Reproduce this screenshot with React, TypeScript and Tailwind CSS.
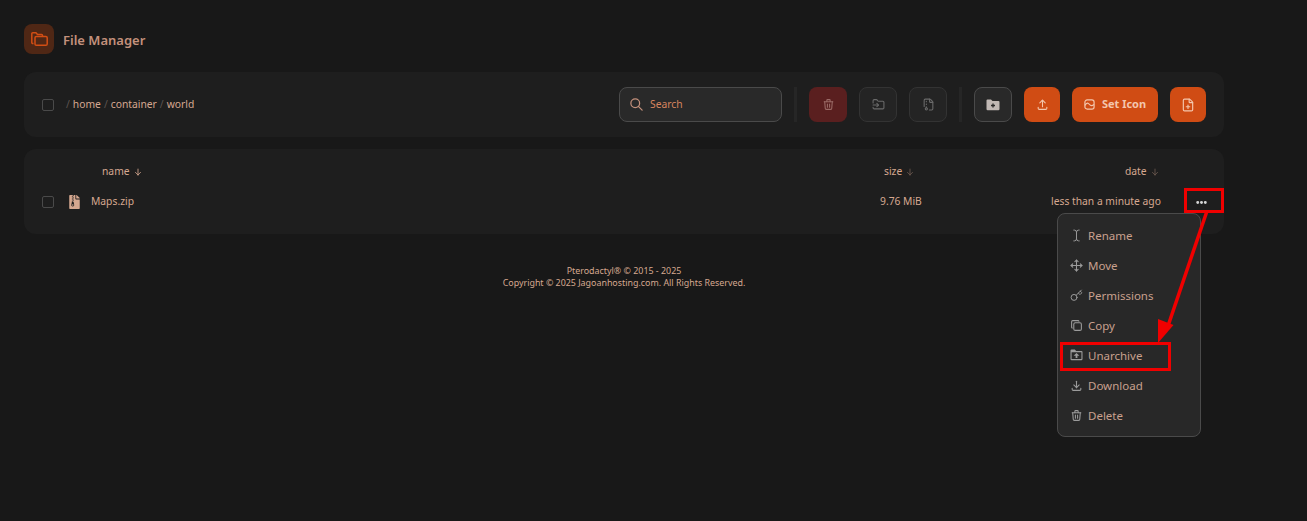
import { TbSearch, TbTrash, TbUpload, TbDots, TbCopy, TbDownload, TbArrowDown } from "react-icons/tb";
import { FolderInput, FileArchive, FilePlus, TextCursor, Move, Key } from "lucide-react";
import { FaFileArchive } from "react-icons/fa";

function HeaderFolders() {
  return (
    <svg width="17" height="14" viewBox="0 0 17 14" fill="none" stroke="currentColor" strokeWidth="1.5" strokeLinejoin="round">
      <path d="M2.5 11.5 H1.8 A1 1 0 0 1 0.8 10.5 V1.8 A1 1 0 0 1 1.8 0.8 H5 L6.5 2.6 H10.5 A1 1 0 0 1 11.5 3.6 V4.5" />
      <rect x="4" y="4.5" width="12.2" height="8.7" rx="1.3" />
    </svg>
  );
}
function SetIcon() {
  return (
    <svg width="11" height="11" viewBox="0 0 12 12" fill="none" stroke="currentColor" strokeWidth="1.3">
      <rect x="1" y="1" width="10" height="10" rx="2.4" />
      <path d="M1 7 C3 3.5 4.5 4 6 6 S9 7.5 11 6" />
    </svg>
  );
}
function FolderPlusSolid() {
  return (
    <svg width="14" height="12" viewBox="0 0 14 12" fill="currentColor">
      <path d="M1.5 0.5 H5 L6.5 2 H12.5 A1 1 0 0 1 13.5 3 V10 A1.2 1.2 0 0 1 12.3 11.2 H1.7 A1.2 1.2 0 0 1 0.5 10 V1.5 A1 1 0 0 1 1.5 0.5 Z" />
      <path d="M7 4.5 V8.5 M5 6.5 H9" stroke="#292929" strokeWidth="1.3" />
    </svg>
  );
}
function UnarchiveIcon({ className }: { className?: string }) {
  return (
    <svg width="13" height="12" viewBox="0 0 13 12" className={className} fill="currentColor">
      <path fillRule="evenodd" d="M1.5 0.5 H4.8 L6.2 2 H11.5 A1 1 0 0 1 12.5 3 V10 A1.2 1.2 0 0 1 11.3 11.2 H1.7 A1.2 1.2 0 0 1 0.5 10 V1.5 A1 1 0 0 1 1.5 0.5 Z M1.6 3.2 V9.9 H11.4 V3.2 Z" />
      <path d="M6.5 4 L9.4 6.7 H7.4 V8.9 H5.6 V6.7 H3.6 Z" />
    </svg>
  );
}

const menu: { label: string; icon: React.ReactNode }[] = [
  { label: "Rename", icon: <TextCursor size={13} strokeWidth={1.8} /> },
  { label: "Move", icon: <Move size={13} strokeWidth={2} /> },
  { label: "Permissions", icon: <Key size={13} strokeWidth={1.8} /> },
  { label: "Copy", icon: <TbCopy size={13} strokeWidth={2} /> },
  { label: "Unarchive", icon: <UnarchiveIcon /> },
  { label: "Download", icon: <TbDownload size={13} strokeWidth={2} /> },
  { label: "Delete", icon: <TbTrash size={13} strokeWidth={2} /> },
];

function Check() {
  return <span className="block w-3 h-3 border border-[#4a4a4a] rounded-[2px] bg-[#1e1e1e] shrink-0" />;
}

export default function App() {
  return (
    <div className="relative min-h-[521px] bg-[#181818] text-[#d6a890] text-[10.3px] font-['Noto_Sans','Open_Sans',sans-serif] overflow-hidden">
      <div className="w-[1200px] ml-6 pt-6">
        <div className="flex items-center gap-[9px] h-[30px]">
          <div className="w-[30px] h-[30px] rounded-lg bg-[#4f2715] flex items-center justify-center text-[#d24e14]">
            <HeaderFolders />
          </div>
          <h1 className="text-[13px] font-semibold text-[#c4917c] mt-1">File Manager</h1>
        </div>

        <div className="mt-[18px] h-[65px] rounded-xl bg-[#1e1e1e] flex items-center pl-[18px] pr-[18px]">
          <Check />
          <div className="ml-3 flex gap-[3px] text-[#d6a890]">
            <span className="text-[#5c5450]">/</span><span>home</span>
            <span className="text-[#5c5450]">/</span><span>container</span>
            <span className="text-[#5c5450]">/</span><span>world</span>
          </div>
          <div className="ml-auto flex items-center h-[35px]">
            <div className="w-[163px] h-[35px] rounded-lg border border-[#4a4a4a] bg-[#292929] flex items-center pl-[9px] gap-[6px]">
              <TbSearch size={15} className="text-[#c4917c]" />
              <span className="text-[#d6845f]">Search</span>
            </div>
            <div className="w-[3px] h-[35px] bg-[#262626] mx-3" />
            <div className="flex gap-3">
              <button className="w-[38px] h-[35px] rounded-lg bg-[#5a1f1f] flex items-center justify-center text-[#9a6a66]"><TbTrash size={13} /></button>
              <button className="w-[38px] h-[35px] rounded-lg border border-[#333] bg-[#242424] flex items-center justify-center text-[#6a6a6a]"><FolderInput size={13} /></button>
              <button className="w-[38px] h-[35px] rounded-lg border border-[#333] bg-[#242424] flex items-center justify-center text-[#6a6a6a]"><FileArchive size={13} /></button>
            </div>
            <div className="w-[3px] h-[35px] bg-[#262626] mx-3" />
            <button className="w-[38px] h-[35px] rounded-lg border border-[#4a4a4a] bg-[#292929] flex items-center justify-center text-[#c0b8b4]"><FolderPlusSolid /></button>
            <button className="ml-3 w-9 h-[35px] rounded-lg bg-[#d04c14] flex items-center justify-center text-[#f3c6ad]"><TbUpload size={13} /></button>
            <button className="ml-3 w-[86px] h-[35px] rounded-lg bg-[#d04c14] flex items-center justify-center gap-[7px] text-[#f3c6ad] text-[11px] font-bold"><SetIcon /><span>Set Icon</span></button>
            <button className="ml-3 w-9 h-[35px] rounded-lg bg-[#d04c14] flex items-center justify-center text-[#f3c6ad]"><FilePlus size={14} /></button>
          </div>
        </div>

        <div className="mt-3 h-[85px] rounded-xl bg-[#1e1e1e] pl-[18px] relative">
          <div className="flex items-center h-[44px] pt-[2px]">
            <span className="ml-[60px] w-[782px] flex items-center gap-[3px]">name <TbArrowDown size={10} /></span>
            <span className="w-[241px] flex items-center gap-[3px]">size <TbArrowDown size={10} className="text-[#6d5a50]" /></span>
            <span className="flex items-center gap-[3px]">date <TbArrowDown size={10} className="text-[#6d5a50]" /></span>
          </div>
          <div className="flex items-center h-[18px]">
            <Check />
            <FaFileArchive size={14} className="ml-[15px] text-[#d6a890] w-[11px]" />
            <span className="ml-[11px] w-[789px]">Maps.zip</span>
            <span className="w-[171px]">9.76 MiB</span>
            <span className="w-[109px] whitespace-nowrap">less than a minute ago</span>
            <span className="ml-[33px] w-[16px] flex justify-center text-[#d6d6d6]"><TbDots size={13} strokeWidth={3.5} /></span>
          </div>
        </div>

        <div className="mt-[31px] text-center text-[8.9px] leading-[12px] text-[#d6a890]">
          <p>Pterodactyl® © 2015 - 2025</p>
          <p>Copyright © 2025 Jagoanhosting.com. All Rights Reserved.</p>
        </div>
      </div>

      <div className="absolute left-[1057px] top-[213px] w-[144px] h-[224px] rounded-lg border border-[#4a4a4a] bg-[#282828] py-[6px]">
        {menu.map(({ label, icon }) => (
          <div key={label} className="h-[30px] flex items-center pl-3 gap-[5px] text-[#c9a08e] text-[11.5px]">
            <span className="w-[13px] flex justify-center text-[#9b9b9b]">{icon}</span>
            <span className="translate-y-[1px]">{label}</span>
          </div>
        ))}
      </div>

      <div className="absolute left-[1184px] top-[188px] w-10 h-[25px] border-[3px] border-[#f00000]" />
      <div className="absolute left-[1060px] top-[342px] w-[111px] h-[29px] border-[3px] border-[#f00000]" />
      <svg className="absolute left-0 top-0 pointer-events-none" width="1307" height="521">
        <line x1="1207" y1="211" x2="1168" y2="326" stroke="#f00000" strokeWidth="3.5" />
        <polygon points="1158,343 1158,319 1173.5,325" fill="#f00000" />
      </svg>
    </div>
  );
}
